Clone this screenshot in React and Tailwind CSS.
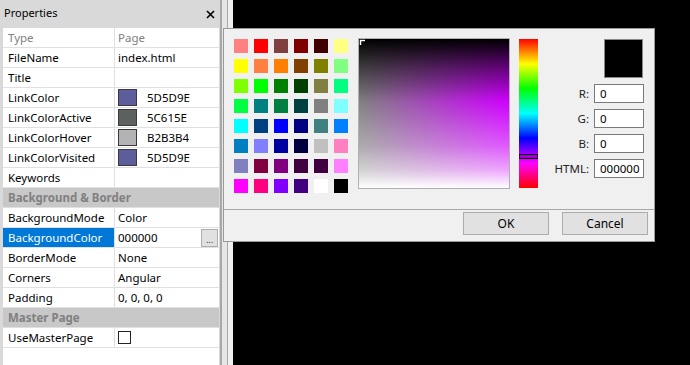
import React from "react";

const rows = [
  { k: "Type", v: "Page", dim: true },
  { k: "FileName", v: "index.html" },
  { k: "Title", v: "" },
  { k: "LinkColor", v: "5D5D9E", sw: "bg-[#5d5d9e]" },
  { k: "LinkColorActive", v: "5C615E", sw: "bg-[#5c615e]" },
  { k: "LinkColorHover", v: "B2B3B4", sw: "bg-[#b2b3b4]" },
  { k: "LinkColorVisited", v: "5D5D9E", sw: "bg-[#5d5d9e]" },
  { k: "Keywords", v: "" },
  { header: "Background & Border" },
  { k: "BackgroundMode", v: "Color" },
  { k: "BackgroundColor", v: "000000", sel: true },
  { k: "BorderMode", v: "None" },
  { k: "Corners", v: "Angular" },
  { k: "Padding", v: "0, 0, 0, 0" },
  { header: "Master Page" },
  { k: "UseMasterPage", check: true },
];

const swatches = [
  "bg-[#ff8080]", "bg-[#ff0000]", "bg-[#804040]", "bg-[#800000]", "bg-[#400000]", "bg-[#ffff80]",
  "bg-[#ffff00]", "bg-[#ff8040]", "bg-[#ff8000]", "bg-[#804000]", "bg-[#808000]", "bg-[#80ff80]",
  "bg-[#80ff00]", "bg-[#00ff00]", "bg-[#008000]", "bg-[#004000]", "bg-[#808040]", "bg-[#00ff80]",
  "bg-[#00ff40]", "bg-[#008080]", "bg-[#008040]", "bg-[#004040]", "bg-[#808080]", "bg-[#80ffff]",
  "bg-[#00ffff]", "bg-[#004080]", "bg-[#0000ff]", "bg-[#000080]", "bg-[#408080]", "bg-[#0080ff]",
  "bg-[#0080c0]", "bg-[#8080ff]", "bg-[#0000a0]", "bg-[#000040]", "bg-[#c0c0c0]", "bg-[#ff80c0]",
  "bg-[#8080c0]", "bg-[#800040]", "bg-[#800080]", "bg-[#400040]", "bg-[#400040]", "bg-[#ff80ff]",
  "bg-[#ff00ff]", "bg-[#ff0080]", "bg-[#8000ff]", "bg-[#400080]", "bg-[#ffffff]", "bg-[#000000]",
];

function Row({ r }) {
  if (r.header) {
    return (
      <div className="h-[20px] bg-[#c8c8c8] border-b border-[#e0e0e0] pl-[5px] leading-[20px] font-bold text-[#808080]">
        {r.header}
      </div>
    );
  }
  return (
    <div className="h-[20px] flex border-b border-[#e0e0e0]">
      <div
        className={
          "w-[112px] shrink-0 border-r border-[#e0e0e0] pl-[5px] leading-[19px] " +
          (r.sel ? "bg-[#0078d7] text-white" : r.dim ? "text-[#808080]" : "text-black")
        }
      >
        {r.k}
      </div>
      <div className={"flex-1 flex items-center pl-[3px] " + (r.dim ? "text-[#808080]" : "text-black")}>
        {r.sw && <div className={"w-[19px] h-[17px] border border-[#3a3a3a] mr-[10px] " + r.sw} />}
        {r.check && <div className="w-[13px] h-[13px] border border-[#222] bg-white" />}
        <span className="leading-[19px]">{r.v}</span>
        {r.sel && (
          <div className="ml-auto mr-[1px] w-[17px] h-[18px] bg-[#e1e1e1] border border-[#adadad] flex items-end justify-center text-[9px] leading-[12px] text-[#333]">
            ...
          </div>
        )}
      </div>
    </div>
  );
}

function Field({ label, value }) {
  return (
    <div className="flex items-center justify-end">
      <span className="mr-[5px] text-[#222]">{label}</span>
      <div className="w-[50px] h-[19px] border border-[#7a7a7a] bg-white pl-[5px] leading-[17px] text-black">
        {value}
      </div>
    </div>
  );
}

function SLSquare() {
  return (
    <svg width="150" height="149" viewBox="0 0 150 149" className="block">
      <defs>
        <linearGradient id="sat" x1="0" y1="0" x2="1" y2="0">
          <stop offset="0" stopColor="#808080" />
          <stop offset="1" stopColor="#cf00ff" />
        </linearGradient>
        <linearGradient id="lum" x1="0" y1="0" x2="0" y2="1">
          <stop offset="0" stopColor="#000000" stopOpacity="1" />
          <stop offset="0.2" stopColor="#000000" stopOpacity="0.5" />
          <stop offset="0.42" stopColor="#000000" stopOpacity="0" />
          <stop offset="0.42" stopColor="#ffffff" stopOpacity="0" />
          <stop offset="0.72" stopColor="#ffffff" stopOpacity="0.35" />
          <stop offset="0.88" stopColor="#ffffff" stopOpacity="0.65" />
          <stop offset="1" stopColor="#ffffff" stopOpacity="1" />
        </linearGradient>
      </defs>
      <rect x="0" y="0" width="150" height="149" fill="url(#sat)" />
      <rect x="0" y="0" width="150" height="149" fill="url(#lum)" />
      <path d="M1.5 6V1.5H6" stroke="#fff" strokeWidth="1.5" fill="none" />
    </svg>
  );
}

function HueBar() {
  return (
    <svg width="19" height="149" viewBox="0 0 19 149" className="block">
      <defs>
        <linearGradient id="hue" x1="0" y1="0" x2="0" y2="1">
          <stop offset="0" stopColor="#ff0000" />
          <stop offset="0.1667" stopColor="#ffff00" />
          <stop offset="0.3333" stopColor="#00ff00" />
          <stop offset="0.5" stopColor="#00ffff" />
          <stop offset="0.6667" stopColor="#0000ff" />
          <stop offset="0.8333" stopColor="#ff00ff" />
          <stop offset="1" stopColor="#ff0000" />
        </linearGradient>
      </defs>
      <rect x="0" y="0" width="19" height="149" fill="url(#hue)" />
      <rect x="0" y="115.5" width="19" height="4" fill="#a000d0" stroke="#000" strokeWidth="1" />
    </svg>
  );
}

export default function App() {
  return (
    <div className="relative w-[690px] h-[365px] overflow-hidden flex bg-black font-['Noto_Sans',sans-serif] text-[11.5px]">
      {/* Properties panel */}
      <div className="w-[220px] h-full shrink-0 flex flex-col bg-[#d9d9d9]">
        <div className="h-[28px] shrink-0 flex items-center pl-[4px] pr-[4px] text-black text-[11px]">
          <span className="pb-[1px]">Properties</span>
          <svg className="ml-auto mr-[1px]" width="9" height="9" viewBox="0 0 9 9">
            <path d="M1 1L8 8M8 1L1 8" stroke="#000" strokeWidth="1.6" />
          </svg>
        </div>
        <div className="flex-1 ml-[3px] mr-[1px] bg-white">
          {rows.map((r, i) => (
            <Row key={i} r={r} />
          ))}
        </div>
      </div>
      <div className="w-[2px] h-full bg-[#a8a8a8]" />
      <div className="w-[5px] h-full bg-[#e6e6e6]" />
      <div className="w-[1px] h-full bg-[#a8a8a8]" />
      <div className="w-[5px] h-full bg-[#f0f0f0]" />
      <div className="flex-1 h-full bg-black" />

      {/* Color dialog */}
      <div className="absolute left-[223px] top-[28px] w-[432px] h-[214px] bg-[#f0f0f0] border border-[#9a9a9a] flex flex-col">
        <div className="flex pl-[10px] pr-[10px] pt-[10px] h-[180px]">
          <div className="grid grid-cols-6 gap-[6px] w-[114px] h-[154px] content-start">
            {swatches.map((c, i) => (
              <div key={i} className={"w-[14px] h-[14px] " + c} />
            ))}
          </div>
          <div className="ml-[10px] -mt-[1px] w-[152px] h-[151px] border border-[#b0b0b0]">
            <SLSquare />
          </div>
          <div className="ml-[9px] w-[19px] h-[149px]">
            <HueBar />
          </div>
          <div className="flex-1 flex flex-col items-end gap-[6px]">
            <div className="w-[39px] h-[39px] bg-black border border-[#888] mr-[1px]" />
            <Field label="R:" value="0" />
            <Field label="G:" value="0" />
            <Field label="B:" value="0" />
            <Field label="HTML:" value="000000" />
          </div>
        </div>
        <div className="border-t border-[#a8a8a8] flex-1 flex items-start justify-end pt-[2px] pr-[6px] gap-[13px]">
          <div className="w-[86px] h-[23px] bg-[#e1e1e1] border border-[#adadad] flex items-center justify-center text-[12px] text-black">
            OK
          </div>
          <div className="w-[86px] h-[23px] bg-[#e1e1e1] border border-[#adadad] flex items-center justify-center text-[12px] text-black">
            Cancel
          </div>
        </div>
      </div>
    </div>
  );
}
